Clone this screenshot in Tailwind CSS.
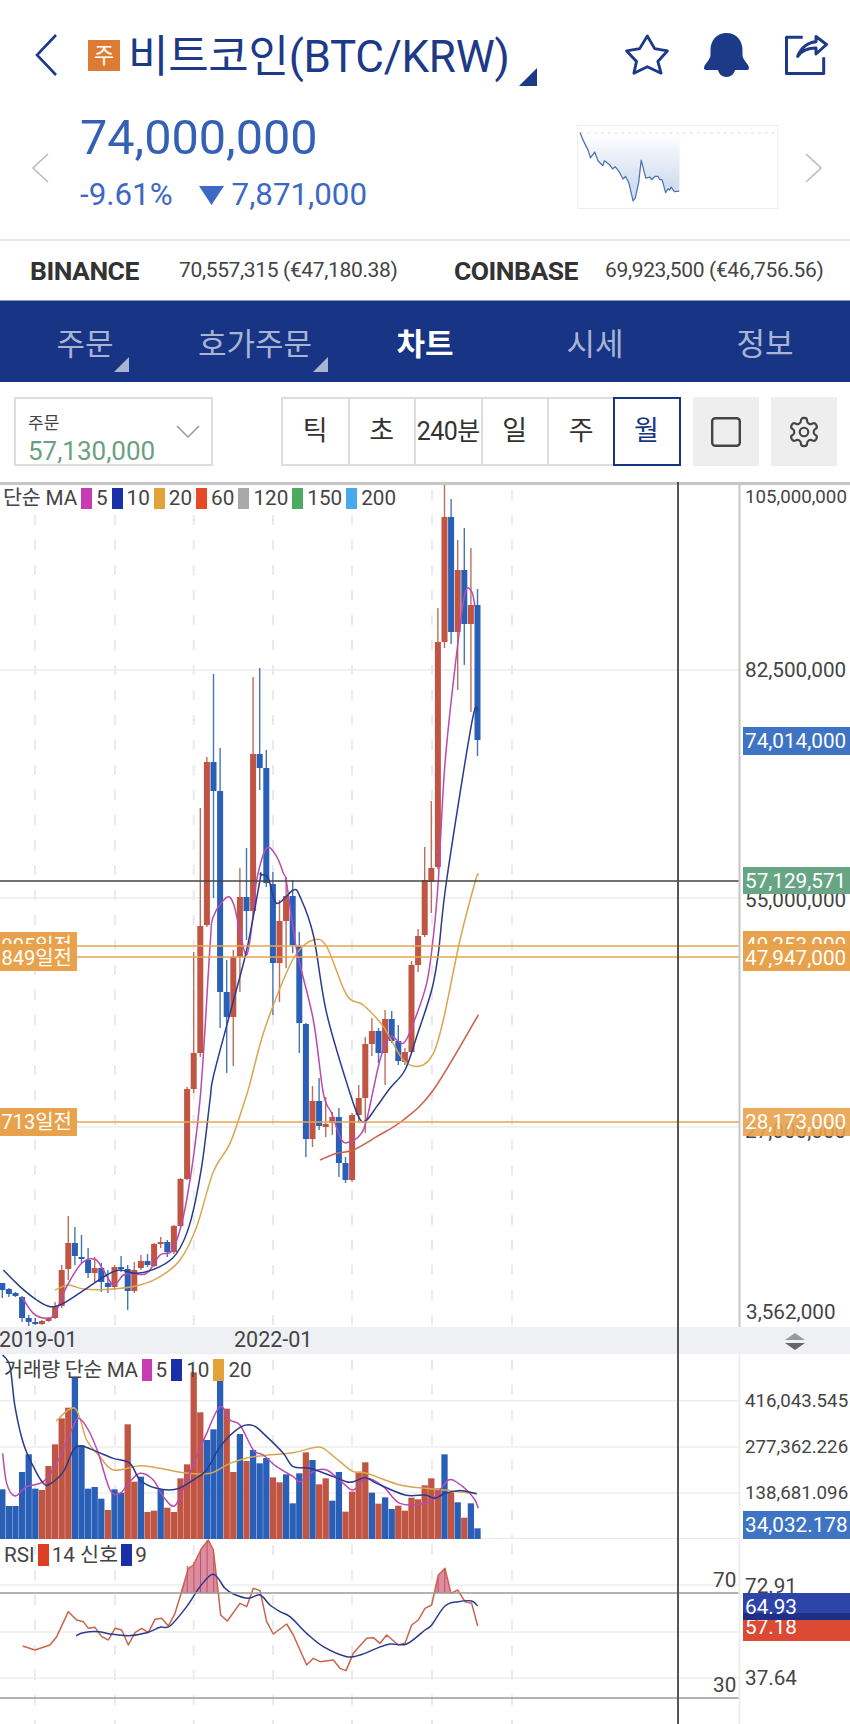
<!DOCTYPE html>
<html lang="ko">
<head>
<meta charset="UTF-8">
<meta name="viewport" content="width=device-width, initial-scale=1.0">
<title>비트코인 차트</title>
<script src="https://cdn.jsdelivr.net/npm/@tailwindcss/browser@4"></script>
</head>
<body class="bg-white font-[Roboto,'Noto_Sans_CJK_KR',sans-serif] text-[#3a3a3a]">
<div class="w-[850px] h-[1724px] overflow-hidden">

  <!-- title row -->
  <div class="flex h-[110px] items-center pl-[35px] pr-[22px] text-[#1c3a87]">
    <svg class="w-[22px] h-[42px]" viewBox="0 0 22 42" fill="none" stroke="#1c3a87" stroke-width="2.6"><path d="M21 1 L2 21 L21 41"/></svg>
    <div class="ml-[31px] w-[32px] h-[31px] bg-[#dd7b33] text-white text-[22px] leading-[31px] text-center">주</div>
    <div class="ml-[8px] mt-[3px] text-[44px] leading-[50px] whitespace-nowrap tracking-[-0.3px]">비트코인(BTC/KRW)</div>
    <svg class="ml-[10px] self-start mt-[68px] w-[18px] h-[18px]" viewBox="0 0 18 18"><path d="M18 0V18H0Z" fill="#1c3a87"/></svg>
    <div class="ml-auto flex items-center gap-[34px]">
      <svg class="w-[45px] h-[43px]" viewBox="-1 -1 47 45" fill="none" stroke="#1c3a87" stroke-width="3" stroke-linejoin="round"><path d="M22.300 1 L30 14.300 L43.300 16.700 L33.300 27.700 L36.700 40 L22.300 33.300 L8.300 40 L11 27.700 L.7 16.700 L14.300 14.300Z"/></svg>
      <svg class="w-[45px] h-[44px] mr-[2px]" viewBox="0 0 45 44" fill="#1c3a87"><path d="M22.500 0C32 0 38.500 7 38.500 17V22C38.500 27 45 31 45 35 45 36.500 44 37 42.500 37H31C30 41 27 44 22.500 44 18 44 15 41 14 37H2.500C1 37 0 36.500 0 35 0 31 6.500 27 6.500 22V17C6.500 7 13 0 22.500 0Z"/></svg>
      <svg class="w-[43px] h-[41px]" viewBox="0 0 43 41" fill="none" stroke="#1c3a87" stroke-width="3" stroke-linejoin="round"><path d="M17.700 2.300H1.500V38.500H38.700V22.300"/><path d="M12.700 21.300C16 12 24 7 31 6.700V1.500L41.500 9.500 31 19V13C24 13 17 15 12.700 21.300Z"/></svg>
    </div>
  </div>

  <!-- price row -->
  <div class="flex h-[131px] pl-[32px] border-b-2 border-[#e9e9e9]">
    <svg class="mt-[43px] w-[17px] h-[30px]" viewBox="0 0 17 30" fill="none" stroke="#bdbdbd" stroke-width="1.600"><path d="M16 1 L1 15 L16 29"/></svg>
    <div class="ml-[31px] pt-[1px]">
      <div class="text-[48.600px] leading-[54px] text-[#3561b5] whitespace-nowrap">74,000,000</div>
      <div class="mt-[12px] flex items-center h-[36px] text-[31.300px] text-[#3d68c4] whitespace-nowrap">
        <span>-9.61%</span>
        <svg class="ml-[26px] w-[25px] h-[19px]" viewBox="0 0 25 19"><path d="M0 0H25L12.500 19Z" fill="#3d68c4"/></svg>
        <span class="ml-[8px]">7,871,000</span>
      </div>
    </div>
    <svg class="ml-auto mt-[15px] w-[201px] h-[84px] border border-[#eeeeee]" viewBox="576 125 201 84" id="mini"></svg>
    <svg class="ml-[27px] mr-[28px] mt-[43px] w-[17px] h-[30px]" viewBox="0 0 17 30" fill="none" stroke="#bdbdbd" stroke-width="1.600"><path d="M1 1 L16 15 L1 29"/></svg>
  </div>

  <!-- exchanges -->
  <div class="flex items-center h-[59px] pl-[30px] text-[21px] text-[#444] whitespace-nowrap tracking-[-0.35px]">
    <span class="w-[149px] text-[26.500px] font-bold text-[#333] tracking-[-0.5px]">BINANCE</span>
    <span class="w-[275px]">70,557,315 (€47,180.38)</span>
    <span class="w-[151px] text-[26.500px] font-bold text-[#333] tracking-[-0.5px]">COINBASE</span>
    <span>69,923,500 (€46,756.56)</span>
  </div>

  <!-- tabs -->
  <div class="grid grid-cols-5 h-[82px] bg-[#173584] text-[31px] text-[#a9b4d3] border-t border-[#8c9ab8]">
    <div class="relative flex items-center justify-center pt-[7px]">주문<svg class="absolute left-[114px] top-[56px] w-[15px] h-[15px]" viewBox="0 0 15 15"><path d="M15 0V15H0Z" fill="#a9b4d3"/></svg></div>
    <div class="relative flex items-center justify-center pt-[7px]">호가주문<svg class="absolute left-[143px] top-[56px] w-[15px] h-[15px]" viewBox="0 0 15 15"><path d="M15 0V15H0Z" fill="#a9b4d3"/></svg></div>
    <div class="flex items-center justify-center pt-[7px] font-bold text-white">차트</div>
    <div class="flex items-center justify-center pt-[7px]">시세</div>
    <div class="flex items-center justify-center pt-[7px]">정보</div>
  </div>

  <!-- toolbar -->
  <div class="flex h-[100px] pl-[14px] pt-[15px]">
    <div class="relative w-[199px] h-[69px] border-2 border-[#dddddd] pl-[12px]">
      <div class="text-[17px] leading-[20px] mt-[14px] text-[#444]">주문</div>
      <div class="text-[26px] leading-[30px] mt-[3px] text-[#6a9f82]">57,130,000</div>
      <svg class="absolute right-[11px] top-[26px] w-[24px] h-[13px]" viewBox="0 0 24 13" fill="none" stroke="#999" stroke-width="1.500"><path d="M1 1 L12 12 L23 1"/></svg>
    </div>
    <div class="ml-[68px] flex h-[69px] text-[27px] text-[#333]">
      <div class="w-[66.500px] border-y-2 border-l-2 border-[#dddddd] flex items-center justify-center">틱</div>
      <div class="w-[66.500px] border-y-2 border-l-2 border-[#dddddd] flex items-center justify-center">초</div>
      <div class="w-[66.500px] border-y-2 border-l-2 border-[#dddddd] flex items-center justify-center text-[25px] whitespace-nowrap tracking-[-0.5px]">240분</div>
      <div class="w-[66.500px] border-y-2 border-l-2 border-[#dddddd] flex items-center justify-center">일</div>
      <div class="w-[66.500px] border-y-2 border-l-2 border-[#dddddd] flex items-center justify-center">주</div>
      <div class="w-[68px] -ml-[1px] border-[2.500px] border-[#173584] text-[#173584] flex items-center justify-center">월</div>
    </div>
    <div class="ml-[12px] w-[66px] h-[69px] bg-[#eeeeee] flex items-center justify-center">
      <svg class="w-[30px] h-[30px]" viewBox="0 0 30 30" fill="none" stroke="#444" stroke-width="2.400"><rect x="1.200" y="1.200" width="27.600" height="27.600" rx="3"/></svg>
    </div>
    <div class="ml-[12px] w-[66px] h-[69px] bg-[#eeeeee] flex items-center justify-center">
      <svg class="w-[34px] h-[34px]" viewBox="0 0 24 24" fill="none" stroke="#444" stroke-width="1.500" stroke-linejoin="round"><path d="M12.220 2h-.44a2 2 0 0 0-2 2v.18a2 2 0 0 1-1 1.730l-.43.25a2 2 0 0 1-2 0l-.15-.08a2 2 0 0 0-2.730.73l-.22.38a2 2 0 0 0 .73 2.730l.15.1a2 2 0 0 1 1 1.720v.51a2 2 0 0 1-1 1.740l-.15.09a2 2 0 0 0-.73 2.730l.22.38a2 2 0 0 0 2.730.73l.15-.08a2 2 0 0 1 2 0l.43.25a2 2 0 0 1 1 1.730V20a2 2 0 0 0 2 2h.44a2 2 0 0 0 2-2v-.18a2 2 0 0 1 1-1.730l.43-.25a2 2 0 0 1 2 0l.15.08a2 2 0 0 0 2.730-.73l.22-.39a2 2 0 0 0-.73-2.730l-.15-.08a2 2 0 0 1-1-1.740v-.5a2 2 0 0 1 1-1.740l.15-.09a2 2 0 0 0 .73-2.730l-.22-.38a2 2 0 0 0-2.730-.73l-.15.08a2 2 0 0 1-2 0l-.43-.25a2 2 0 0 1-1-1.730V4a2 2 0 0 0-2-2z"/><circle cx="12" cy="12" r="3"/></svg>
    </div>
  </div>

  <!-- chart -->
  <div class="relative text-[20.700px] leading-[28px] whitespace-nowrap text-[#444]">

    <!-- price pane -->
    <div class="relative h-[845px] border-t-[3px] border-[#c6c6c6] box-border overflow-hidden">
      <svg id="price" class="absolute left-0 top-[-3px] w-[850px] h-[845px]" viewBox="0 482 850 845"></svg>
      <div class="absolute left-0 top-[-1px] flex items-center h-[28px] gap-[4px]">
        <span class="ml-[3px] tracking-[-0.2px]">단순 MA</span>
        <i class="w-[11px] h-[21px] bg-[#c93bb2]"></i><span>5</span>
        <i class="w-[11px] h-[21px] bg-[#1a2fa8]"></i><span>10</span>
        <i class="w-[11px] h-[21px] bg-[#e3a339]"></i><span>20</span>
        <i class="w-[11px] h-[21px] bg-[#e64a25]"></i><span>60</span>
        <i class="w-[11px] h-[21px] bg-[#a9a9a9]"></i><span>120</span>
        <i class="w-[11px] h-[21px] bg-[#4cab5f]"></i><span>150</span>
        <i class="w-[11px] h-[21px] bg-[#4aa9ec]"></i><span>200</span>
      </div>
      <div class="absolute left-[745px] top-[-2px] text-[18.700px]">105,000,000</div>
      <div class="absolute left-[745px] top-[171px]">82,500,000</div>
      <div class="absolute left-[743px] top-[242px] w-[107px] h-[28px] pl-[2px] bg-[#3f74c4] text-white">74,014,000</div>
      <div class="absolute left-[745px] top-[401px]">55,000,000</div>
      <div class="absolute left-[743px] top-[382px] w-[107px] h-[27px] pl-[2px] bg-[#67a585] text-white">57,129,571</div>
      <div class="absolute left-[743px] top-[446px] w-[107px] h-[27px] pl-[2px] bg-[#e9a24c] text-white">49,253,000</div>
      <div class="absolute left-[743px] top-[459px] w-[107px] h-[27px] pl-[2px] bg-[#e9a24c] text-white">47,947,000</div>
      <div class="absolute left-[745px] top-[632px]">27,000,000</div>
      <div class="absolute left-[743px] top-[623px] w-[107px] h-[28px] pl-[2px] bg-[#e9a24c]/90 text-white">28,173,000</div>
      <div class="absolute left-[746px] top-[813px]">3,562,000</div>
      <div class="absolute left-0 top-[447px] w-[77px] h-[26px] pr-[5px] text-right bg-[#e9a24c] text-white text-[20px]">905일전</div>
      <div class="absolute left-0 top-[459px] w-[77px] h-[27px] pr-[5px] text-right bg-[#e9a24c] text-white text-[20px]">849일전</div>
      <div class="absolute left-0 top-[623px] w-[77px] h-[28px] pr-[5px] text-right bg-[#e9a24c] text-white text-[20px]">713일전</div>
    </div>

    <!-- time axis -->
    <div class="relative h-[27px] bg-[#eef0f4] overflow-hidden">
      <span class="absolute left-[-1px] top-[-1px] text-[21.500px]">2019-01</span>
      <span class="absolute left-[234px] top-[-1px] text-[21.500px]">2022-01</span>
      <svg class="absolute left-[784px] top-[6px] w-[22px] h-[17px]" viewBox="0 0 22 17"><path d="M11 0L21 7H1Z" fill="#9a9a9a"/><path d="M1 10H21L11 17Z" fill="#666"/></svg>
    </div>

    <!-- volume pane -->
    <div class="relative h-[185px] overflow-hidden">
      <svg id="volume" class="absolute left-0 top-0 w-[850px] h-[185px]" viewBox="0 1354 850 185"></svg>
      <div class="absolute left-0 top-[2px] flex items-center h-[28px] gap-[4px]">
        <span class="ml-[4px] tracking-[-0.4px]">거래량 단순 MA</span>
        <i class="w-[10px] h-[22px] bg-[#c93bb2]"></i><span>5</span>
        <i class="w-[11px] h-[22px] bg-[#1a2fa8]"></i><span>10</span>
        <i class="w-[11px] h-[22px] bg-[#e3a339]"></i><span>20</span>
      </div>
      <div class="absolute left-[745px] top-[33px] text-[18.700px]">416,043.545</div>
      <div class="absolute left-[745px] top-[79px] text-[18.700px]">277,362.226</div>
      <div class="absolute left-[745px] top-[125px] text-[18.700px]">138,681.096</div>
      <div class="absolute left-[743px] top-[157px] w-[107px] h-[28px] pl-[2px] bg-[#3f74c4] text-white">34,032.178</div>
    </div>

    <!-- rsi pane -->
    <div class="relative h-[185px] overflow-hidden">
      <svg id="rsi" class="absolute left-0 top-0 w-[850px] h-[185px]" viewBox="0 1539 850 185"></svg>
      <div class="absolute left-0 top-[2px] flex items-center h-[28px] gap-[3px]">
        <span class="ml-[4px]">RSI</span>
        <i class="w-[11px] h-[22px] bg-[#dc3f24]"></i><span>14 신호</span>
        <i class="w-[11px] h-[22px] bg-[#1a2fa8]"></i><span>9</span>
      </div>
      <div class="absolute left-[713px] top-[27px]">70</div>
      <div class="absolute left-[713px] top-[132px]">30</div>
      <div class="absolute left-[745px] top-[33px]">72.91</div>
      <div class="absolute left-[743px] top-[74px] w-[107px] h-[28px] pl-[2px] bg-[#dc4a34] text-white">57.18</div>
      <div class="absolute left-[743px] top-[54px] w-[107px] h-[27px] pl-[2px] bg-[#2d44a8] border-b-[7px] border-[#1f2f86] text-white">64.93</div>
      <div class="absolute left-[745px] top-[125px]">37.64</div>
    </div>

    <!-- crosshair -->
    <div class="absolute left-[677px] top-0 bottom-0 w-[2px] bg-[#555]"></div>
  </div>
</div>

<script>
const RED = '#c05544', BLUE = '#2a5fb8', PINK = '#b94bb0', NAVY = '#2b3a8c', GOLD = '#d9a650', DARKRED = '#c9644c';
const step = 6.6, x0 = 2.3;

// top, bottom, wick top, wick bottom, colour (r/b)
const candles = [
  [1283,1290,1283,1298,'b'],[1289,1294,1288,1297,'b'],[1293,1296,1292,1297,'b'],[1297,1318,1296,1322,'b'],
  [1318,1322,1315,1326,'b'],[1322,1324,1318,1325,'b'],[1321,1324,1320,1325,'r'],[1318,1321,1317,1322,'r'],
  [1306,1318,1302,1319,'r'],[1270,1306,1265,1308,'r'],[1243,1269,1216,1280,'r'],[1243,1256,1227,1265,'b'],
  [1257,1259,1235,1263,'b'],[1260,1273,1248,1278,'b'],[1268,1273,1257,1283,'r'],[1268,1282,1263,1292,'b'],
  [1283,1287,1270,1293,'b'],[1267,1287,1265,1290,'r'],[1267,1269,1256,1272,'b'],[1269,1291,1265,1310,'b'],
  [1270,1291,1262,1293,'r'],[1261,1268,1255,1270,'r'],[1261,1265,1254,1267,'b'],[1244,1266,1243,1267,'r'],
  [1242,1244,1237,1248,'r'],[1242,1252,1240,1257,'b'],[1226,1252,1225,1254,'r'],[1179,1226,1178,1227,'r'],
  [1089,1179,1087,1180,'r'],[1053,1089,952,1093,'r'],[926,1053,808,1057,'r'],[762,925,757,927,'r'],
  [762,791,674,898,'b'],[791,992,748,1028,'b'],[992,1017,960,1073,'b'],[957,1017,950,1066,'r'],
  [897,957,868,992,'r'],[897,911,848,940,'b'],[754,911,677,915,'r'],[754,768,668,790,'b'],
  [768,883,750,887,'b'],[884,963,872,1015,'b'],[921,963,900,1002,'r'],[896,921,877,968,'r'],
  [896,945,880,953,'b'],[946,1023,932,1053,'b'],[1024,1139,1023,1157,'b'],[1101,1139,1086,1147,'r'],
  [1101,1126,1078,1130,'b'],[1124,1127,1097,1137,'r'],[1117,1123,1112,1135,'r'],[1117,1163,1108,1177,'b'],
  [1163,1180,1157,1183,'b'],[1115,1180,1113,1182,'r'],[1098,1115,1085,1123,'r'],[1044,1098,1037,1133,'r'],
  [1031,1044,1018,1056,'r'],[1031,1053,1028,1063,'b'],[1019,1053,1010,1085,'r'],[1019,1041,1011,1043,'b'],
  [1041,1061,1025,1065,'b'],[1052,1062,1048,1065,'r'],[965,1052,961,1053,'r'],[936,965,929,972,'r'],
  [880,935,847,937,'r'],[868,882,801,913,'r'],[642,867,608,869,'r'],[517,642,482,648,'r'],
  [517,632,499,644,'b'],[570,632,540,690,'r'],[570,624,528,665,'b'],[605,624,548,712,'r'],
  [605,740,589,756,'b']
];

// volume bar tops, in 3x crop coordinates
const vols = [448,498,498,396,343,446,450,378,313,235,203,113,316,446,441,476,510,448,458,253,425,410,516,512,448,503,516,415,373,97,217,300,268,120,206,396,282,363,330,370,354,412,427,403,490,400,337,360,433,415,482,396,515,455,395,367,458,491,472,507,497,512,473,478,436,415,445,343,458,487,533,490,565];
const volColor = 'bbbbbbrrrrrbbbbbrbbrrbrrbrrrrrrbbbrrbrbbbrrbbbrbrrbbrrrrbrbbrrrrrrrbrbrb';

const from = (ox, oy) => pts => pts.map(p => [ox + p[0] / 3, oy + p[1] / 3]);
const z3 = from(150, 480), z4 = from(150, 880), z5 = from(0, 1100), z6 = from(0, 1340), z7 = from(425, 1340);

const ma5 = [...z5([[65,590],[100,640],[140,655],[165,640],[200,560],[245,490],[285,478],[310,510],[340,555],[370,525],[395,520],[440,520],[480,465],[520,445],[560,300],[600,0]]),
  ...z4([[180,200],[190,110],[230,52],[250,70],[265,130],[290,225],[310,100]]), ...z3([[320,1200],[350,1105],[380,1130],[400,1180],[410,1210]]),
  ...z4([[440,210],[490,420],[520,640],[545,700],[575,780],[600,785],[630,765],[650,720],[690,540],[720,470],[760,490],[790,430],[830,310],[850,170],[865,0]]),
  ...z3([[885,850],[920,520],[945,340],[965,335],[975,380]])];
const ma10 = [...z5([[10,510],[60,560],[110,600],[150,620],[190,610],[260,565],[320,525],[360,510],[410,520],[480,500],[530,460],[570,370],[605,200],[630,0]]),
  ...z4([[190,590],[240,400],[290,210],[330,0]]), ...z3([[332,1185],[355,1195]]),
  ...z4([[380,70],[430,30],[450,50],[490,165],[530,400],[600,640],[630,718],[650,720],[680,680],[720,625],[765,570],[800,470],[845,330],[865,220],[890,0]]),
  ...z3([[965,730],[984,690]])];
const ma20 = [...z5([[165,570],[205,555],[250,567],[330,568],[420,555],[480,530],[540,480],[590,380],[640,215],[690,130],[735,0]]),
  ...z4([[300,610],[340,460],[400,300],[440,220],[490,180],[530,200],[590,345],[640,375],[700,440],[760,540],[810,558],[850,520],[880,420],[930,180],[977,0]]),
  ...z3([[985,1185]])];
const ma60 = z4([[510,840],[560,820],[610,810],[680,770],[760,720],[850,630],[985,405]]);

const vMa5 = [...z6([[8,340],[20,430],[45,468],[80,440],[130,425],[170,370],[215,270],[235,235],[265,270],[295,340],[330,450],[360,460],[385,430],[420,400],[460,420],[490,470],[525,497],[560,420],[590,350],[620,280],[660,200],[690,240],[720,255],[760,330],[790,345],[830,380],[880,410],[900,425],[940,395],[980,390],[1030,430],[1060,450],[1100,415],[1150,440],[1200,490],[1275,490]]),
  ...z7([[30,470],[70,420],[100,430],[130,455],[150,480],[160,505]])];
const vMa10 = [...z6([[8,45],[30,80],[45,200],[70,310],[100,380],[130,430],[150,432],[190,395],[220,330],[245,318],[290,335],[340,355],[390,370],[420,420],[470,445],[530,447],[580,420],[620,390],[660,320],[720,262],[760,257],[800,290],[850,340],[880,380],[930,385],[1000,410],[1050,427],[1095,413],[1130,430],[1215,465],[1275,465]]),
  ...z7([[30,475],[60,460],[100,452],[130,455],[155,462]])];
const vMa20 = [...z6([[168,243],[225,205],[260,300],[300,350],[340,390],[420,377],[480,385],[550,398],[630,400],[690,370],[760,350],[880,338],[940,323],[970,325],[1020,365],[1060,395],[1100,400],[1200,435],[1275,445]]),
  ...z7([[60,450],[100,455],[155,460]])];

const rsiLine = [...z6([[68,918],[105,930],[150,915],[170,890],[205,815],[230,840],[250,845],[265,865],[285,862],[305,890],[325,900],[345,865],[365,870],[385,915],[405,878],[425,865],[445,878],[465,838],[485,835],[505,858],[525,820],[545,755],[565,685],[580,675],[605,625],[625,600],[640,630],[655,760],[662,825],[682,843],[720,790],[740,800],[760,745],[780,752],[800,845],[820,882],[860,852],[880,885],[920,975],[940,955],[960,965],[1000,960],[1020,985],[1038,992],[1060,940],[1100,895],[1120,893],[1140,910],[1160,885],[1195,915],[1215,910],[1235,855],[1255,840],[1275,805]]),
  ...z7([[20,795],[40,705],[60,685],[78,760],[98,750],[120,785],[140,790],[158,858]])];
const rsiSignal = [...z6([[228,887],[250,878],[295,875],[330,882],[385,887],[440,878],[480,862],[510,858],[560,800],[600,740],[640,703],[675,745],[700,762],[745,775],[780,765],[810,795],[840,815],[870,830],[920,880],[970,920],[1040,950],[1080,945],[1130,925],[1170,912],[1220,912],[1275,870]]),
  ...z7([[20,855],[60,798],[100,785],[140,783],[158,798]])];
const hump1 = z6([[540,760],[565,685],[580,675],[605,625],[625,600],[640,630],[655,760]]);
const hump2 = z7([[28,760],[40,705],[60,685],[78,760]]);

const line = (x1, y1, x2, y2, c, w, extra = '') => `<line x1="${x1}" y1="${y1}" x2="${x2}" y2="${y2}" stroke="${c}" stroke-width="${w}" ${extra}/>`;
const rect = (x, y, w, h, c) => `<rect x="${x}" y="${y}" width="${w}" height="${h}" fill="${c}"/>`;
const poly = (pts, c, w = 1.5) => `<polyline points="${pts.map(p => p.join(',')).join(' ')}" fill="none" stroke="${c}" stroke-width="${w}" stroke-linejoin="round"/>`;

// catmull-rom, moving averages are smooth in the app
function smooth(pts, c, w = 1.5) {
  let d = `M${pts[0][0]} ${pts[0][1]}`;
  for (let i = 0; i < pts.length - 1; i++) {
    const p0 = pts[i - 1] || pts[i], p1 = pts[i], p2 = pts[i + 1], p3 = pts[i + 2] || p2;
    d += `C${p1[0] + (p2[0] - p0[0]) / 6} ${p1[1] + (p2[1] - p0[1]) / 6} ${p2[0] - (p3[0] - p1[0]) / 6} ${p2[1] - (p3[1] - p1[1]) / 6} ${p2[0]} ${p2[1]}`;
  }
  return `<path d="${d}" fill="none" stroke="${c}" stroke-width="${w}"/>`;
}

const gridX = [35, 115, 193.7, 273, 352, 432, 512];
const dashes = (y1, y2) => gridX.map(x => line(x, y1, x, y2, '#eaeaee', 2, 'stroke-dasharray="10 15"')).join('');

// price pane
let s = dashes(490, 1327);
[670, 898, 1127].forEach(y => s += line(0, y, 740, y, '#ececec', 1.5));
candles.forEach((k, i) => {
  const x = x0 + step * i, body = k[4] === 'r' ? RED : BLUE, wick = k[4] === 'r' ? '#bb6f5c' : '#4675b4';
  s += line(x, k[2], x, k[3], wick, 1.4);
  s += rect(x - 3, k[0], 6, k[1] - k[0], body);
});
s += smooth(ma60, DARKRED, 1.6) + smooth(ma20, GOLD) + smooth(ma5, PINK) + smooth(ma10, NAVY);
s += line(0, 881, 740, 881, '#444', 1.6);
[946, 957, 1122].forEach(y => s += line(77, y, 740, y, '#e3a455', 1.4));
s += line(739.5, 482, 739.5, 1327, '#c6c6c6', 2);
document.getElementById('price').innerHTML = s;

// volume pane
let v = dashes(1360, 1539);
[1400.7, 1447, 1493, 1538.5].forEach(y => v += line(0, y, 740, y, '#eeeeee', 1.5));
vols.forEach((t, i) => {
  const y = 1340 + t / 3;
  v += rect(x0 + step * i - 3.15, y, 6.3, 1539 - y, volColor[i] === 'r' ? RED : BLUE);
});
v += smooth(vMa20, GOLD) + smooth(vMa5, PINK) + smooth(vMa10, NAVY);
v += line(739.5, 1354, 739.5, 1539, '#eeeeee', 2);
document.getElementById('volume').innerHTML = v;

// rsi pane
let r = dashes(1545, 1724);
[1585, 1632, 1678].forEach(y => r += line(0, y, 740, y, '#eeeeee', 1.5));
[hump1, hump2].forEach(h => {
  r += `<polygon points="${h.map(p => p.join(',')).join(' ')}" fill="#de8ca0"/>`;
});
[187.3, 193.9, 200.5, 207.1, 213.7, 438.1, 444.7].forEach((x, i) => {
  const top = i === 3 ? 1540 : i === 2 ? 1549 : i === 4 ? 1553 : i === 1 ? 1562 : i === 0 ? 1566 : i === 5 ? 1578 : 1570;
  r += line(x, top, x, 1593, '#b9556a', 1);
});
r += poly(rsiLine, DARKRED, 1.5) + smooth(rsiSignal, NAVY);
r += line(0, 1593, 740, 1593, '#9a9a9a', 1.5) + line(0, 1698, 740, 1698, '#9a9a9a', 1.5);
r += line(739.5, 1539, 739.5, 1724, '#eeeeee', 2);
document.getElementById('rsi').innerHTML = r;

// small sparkline in the header, traced from a 3x crop
const mini = [[20,35],[30,60],[45,90],[52,113],[65,95],[75,122],[90,137],[95,122],[112,135],[120,147],[128,140],[140,155],[152,178],[160,170],[170,190],[183,245],[190,235],[200,190],[208,120],[222,175],[235,172],[240,180],[250,170],[260,170],[265,180],[272,180],[283,220],[290,208],[295,212],[300,203],[310,217],[325,215]].map(p => [570 + p[0] / 3, 120 + p[1] / 3]);
document.getElementById('mini').innerHTML = `<defs><linearGradient id="fade" x1="0" y1="0" x2="0" y2="1"><stop offset="0" stop-color="#ffffff"/><stop offset="0.75" stop-color="#d3dff0"/></linearGradient></defs>`
  + `<polygon points="${mini.map(p => p.join(',')).join(' ')} 679,132 577,132" fill="url(#fade)"/>`
  + line(577, 132, 777, 132, '#e6e6e6', 1.4, 'stroke-dasharray="3 4"') + poly(mini, '#4d74b4', 1.3);
</script>
</body>
</html>
